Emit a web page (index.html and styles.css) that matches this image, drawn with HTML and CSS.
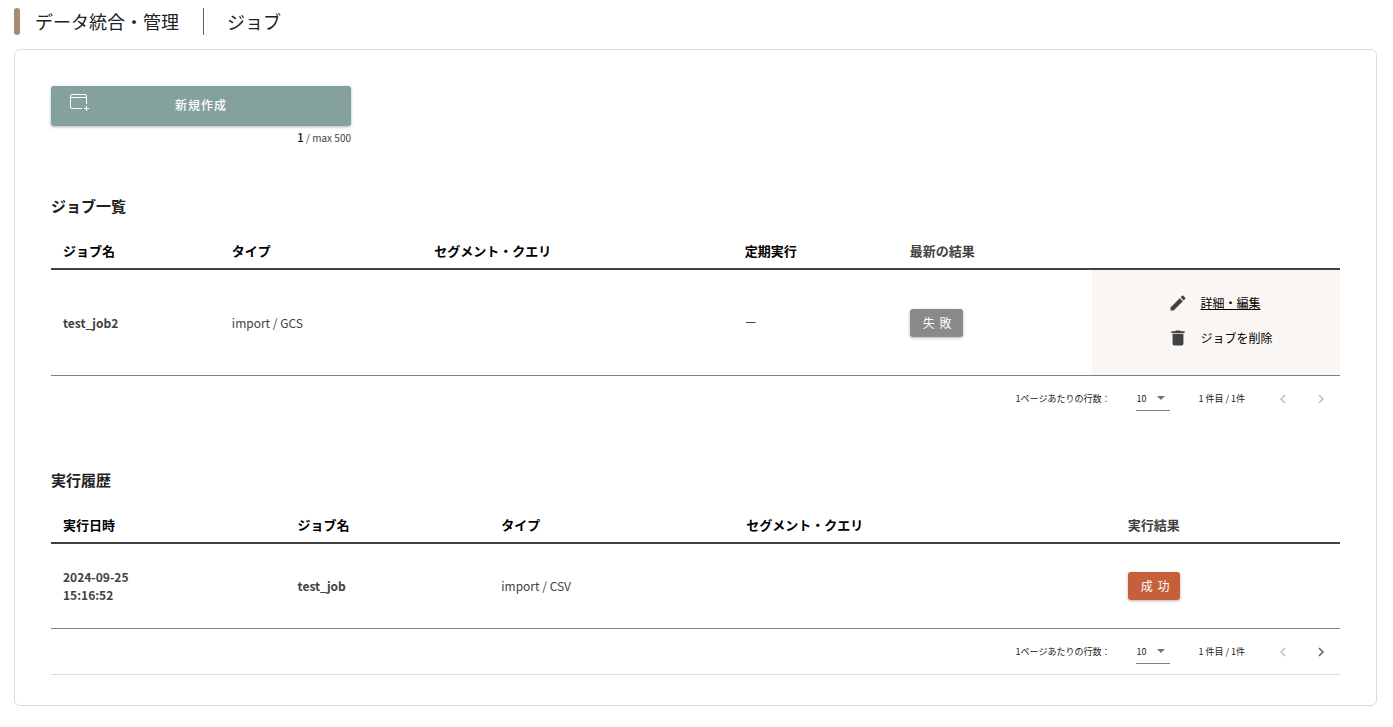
FILE: index.html
```html
<!DOCTYPE html>
<html lang="ja">
<head>
<meta charset="UTF-8">
<meta name="viewport" content="width=device-width, initial-scale=1.0">
<title>データ統合・管理 | ジョブ</title>
<link rel="stylesheet" href="styles.css">
</head>
<body>
<header class="page-header">
    <h1 class="page-title">データ統合・管理</h1>
    <p class="page-subtitle">ジョブ</p>
</header>

<main class="panel">
    <div class="create">
        <button type="button" class="btn-create">
            <svg class="btn-icon" viewBox="0 0 22 20" aria-hidden="true">
                <path d="M13 16.500H3A1.500 1.500 0 0 1 1.500 15V4A1.500 1.500 0 0 1 3 2.500H16A1.500 1.500 0 0 1 17.500 4V12M1.500 5.500H17.500M17.500 14V19M15 16.500H20"/>
            </svg>
            新規作成
        </button>
        <p class="count"><span class="count-now">1</span> / max 500</p>
    </div>

    <section class="section">
        <h2 class="section-title">ジョブ一覧</h2>
        <table class="table jobs">
            <colgroup>
                <col class="job-name"><col class="job-type"><col class="job-segment">
                <col class="job-schedule"><col class="job-result"><col class="job-action">
            </colgroup>
            <thead>
                <tr>
                    <th>ジョブ名</th>
                    <th>タイプ</th>
                    <th>セグメント・クエリ</th>
                    <th>定期実行</th>
                    <th class="muted">最新の結果</th>
                    <th></th>
                </tr>
            </thead>
            <tbody>
                <tr>
                    <td class="strong">test_job2</td>
                    <td>import / GCS</td>
                    <td></td>
                    <td>ー</td>
                    <td><button type="button" class="badge failed">失 敗</button></td>
                    <td class="actions">
                        <a href="#edit" class="action edit">
                            <svg class="action-icon" viewBox="0 0 24 24" aria-hidden="true"><path d="M20.710 7.040C21.100 6.650 21.100 6 20.710 5.630L18.370 3.290C18 2.900 17.350 2.900 16.960 3.290L15.120 5.120L18.870 8.870M3 17.250V21H6.750L17.810 9.930L14.060 6.180L3 17.250Z"/></svg>
                            <span>詳細・編集</span>
                        </a>
                        <button type="button" class="action">
                            <svg class="action-icon" viewBox="0 0 24 24" aria-hidden="true"><path d="M20 4H15.500L14.500 3H9.500L8.500 4H4V6H20M5.500 19A2 2 0 0 0 7.500 21H16.500A2 2 0 0 0 18.500 19V7H5.500V19Z"/></svg>
                            <span>ジョブを削除</span>
                        </button>
                    </td>
                </tr>
            </tbody>
        </table>
        <div class="pagination">
            <label for="jobRows">1ページあたりの行数：</label>
            <div class="rows-select">
                <select id="jobRows">
                    <option selected>10</option>
                    <option>20</option>
                    <option>50</option>
                </select>
                <svg class="caret" viewBox="0 0 8 4" aria-hidden="true"><path d="M0 0H8L4 4Z"/></svg>
            </div>
            <span class="range">1 件目 / 1件</span>
            <button type="button" class="pager" aria-label="前のページ" disabled>
                <svg viewBox="0 0 24 24"><path d="M15.410 7.410L14 6L8 12L14 18L15.410 16.590L10.830 12Z"/></svg>
            </button>
            <button type="button" class="pager" aria-label="次のページ" disabled>
                <svg viewBox="0 0 24 24"><path d="M8.590 16.590L13.170 12L8.590 7.410L10 6L16 12L10 18Z"/></svg>
            </button>
        </div>
    </section>

    <section class="section">
        <h2 class="section-title">実行履歴</h2>
        <table class="table history">
            <colgroup>
                <col class="his-date"><col class="his-name"><col class="his-type">
                <col class="his-segment"><col class="his-result">
            </colgroup>
            <thead>
                <tr>
                    <th>実行日時</th>
                    <th>ジョブ名</th>
                    <th>タイプ</th>
                    <th>セグメント・クエリ</th>
                    <th class="muted">実行結果</th>
                </tr>
            </thead>
            <tbody>
                <tr>
                    <td class="strong">2024-09-25<br>15:16:52</td>
                    <td class="strong">test_job</td>
                    <td>import / CSV</td>
                    <td></td>
                    <td><button type="button" class="badge success">成 功</button></td>
                </tr>
            </tbody>
        </table>
        <div class="pagination bordered">
            <label for="historyRows">1ページあたりの行数：</label>
            <div class="rows-select">
                <select id="historyRows">
                    <option selected>10</option>
                    <option>20</option>
                    <option>50</option>
                </select>
                <svg class="caret" viewBox="0 0 8 4" aria-hidden="true"><path d="M0 0H8L4 4Z"/></svg>
            </div>
            <span class="range">1 件目 / 1件</span>
            <button type="button" class="pager" aria-label="前のページ" disabled>
                <svg viewBox="0 0 24 24"><path d="M15.410 7.410L14 6L8 12L14 18L15.410 16.590L10.830 12Z"/></svg>
            </button>
            <button type="button" class="pager" aria-label="次のページ">
                <svg viewBox="0 0 24 24"><path d="M8.590 16.590L13.170 12L8.590 7.410L10 6L16 12L10 18Z"/></svg>
            </button>
        </div>
    </section>
</main>
</body>
</html>
```

FILE: styles.css
```css
* {
    margin: 0;
    padding: 0;
    box-sizing: border-box;
}
body {
    padding: 8px 16px 20px 14px;
    background-color: #ffffff;
    color: #424242;
    font-family: "Noto Sans CJK JP", sans-serif;
    font-size: 12px;
}
button, select {
    border: none;
    background: none;
    color: inherit;
    font: inherit;
    cursor: pointer;
}

/* header */
.page-header {
    display: flex;
    align-items: center;
    margin-bottom: 14px;
    color: #212121;
    font-size: 18px;
    line-height: 27px;
}
.page-header::before {
    content: "";
    width: 6px;
    height: 27px;
    margin-right: 15px;
    border-radius: 3px;
    background-color: #a58c70;
}
.page-title {
    font-size: 18px;
    font-weight: 400;
}
.page-subtitle {
    margin-left: 24px;
    padding-left: 23px;
    border-left: 1px solid #616161;
}

.panel {
    padding: 36px 36px 30px;
    border: 1px solid #dcdcdc;
    border-radius: 6px;
}

/* create button */
.create {
    width: 300px;
}
.btn-create {
    position: relative;
    display: block;
    width: 100%;
    height: 40px;
    padding-bottom: 4px;
    border-radius: 3px;
    background-color: #85a19e;
    box-shadow: 0 1px 3px rgba(0, 0, 0, 0.3);
    color: #ffffff;
    font-weight: 500;
    letter-spacing: 1px;
}
.btn-icon {
    position: absolute;
    left: 18px;
    top: 6px;
    width: 22px;
    height: 20px;
    fill: none;
    stroke: #ffffff;
    stroke-width: 1;
}
.count {
    font-size: 10px;
    line-height: 22px;
    text-align: right;
}
.count-now {
    color: #212121;
    font-size: 12px;
    font-weight: 500;
}

/* sections */
.section {
    margin-top: 47px;
}
.section-title {
    margin-bottom: 16px;
    color: #212121;
    font-size: 15px;
    font-weight: 700;
    line-height: 24px;
}
.create + .section {
    margin-top: 45px;
}

.table {
    width: 100%;
    table-layout: fixed;
    border-collapse: separate;
    border-spacing: 0;
}
th {
    height: 36px;
    padding: 0 12px 2px;
    border-bottom: 2px solid #424242;
    color: #000000;
    font-size: 13px;
    font-weight: 700;
    text-align: left;
}
th.muted {
    color: #424242;
}
td {
    padding: 0 12px;
    border-bottom: 1px solid #808080;
    line-height: 18px;
    vertical-align: middle;
}
.jobs td {
    height: 106px;
}
.history td {
    height: 85px;
}
.strong {
    font-weight: 700;
}

.job-name { width: 13.1%; }
.job-type { width: 15.7%; }
.job-segment { width: 24.1%; }
.job-schedule { width: 12.8%; }
.job-result { width: 15.1%; }
.job-action { width: 19.2%; }

.his-date { width: 18.2%; }
.his-name { width: 15.8%; }
.his-type { width: 19%; }
.his-segment { width: 29.6%; }
.his-result { width: 17.4%; }

.badge {
    height: 28px;
    padding: 0 10px 0 13px;
    border-radius: 3px;
    box-shadow: 0 1px 3px rgba(0, 0, 0, 0.3);
    color: #ffffff;
    letter-spacing: 1px;
}
.failed {
    background-color: #8a8a8a;
}
.success {
    background-color: #c5603a;
}

.jobs .actions {
    padding: 0 0 4px 76px;
    background-color: #f9f6f3;
}
.action {
    display: flex;
    align-items: center;
    gap: 12px;
    color: #000000;
    line-height: 20px;
}
.action + .action {
    margin-top: 15px;
}
.action-icon {
    width: 20px;
    height: 20px;
    fill: #424242;
}
.edit {
    text-decoration: none;
}
.edit span {
    text-decoration: underline;
}

/* pagination */
.pagination {
    display: flex;
    justify-content: flex-end;
    align-items: center;
    height: 45px;
    color: #212121;
    font-size: 9px;
}
.bordered {
    height: 46px;
    border-bottom: 1px solid #dcdcdc;
}
.rows-select {
    position: relative;
    width: 34px;
    margin: 0 28px 0 26px;
}
.rows-select select {
    display: block;
    width: 100%;
    height: 25px;
    border-bottom: 1px solid #808080;
    appearance: none;
}
.caret {
    position: absolute;
    right: 5px;
    top: 10px;
    width: 8px;
    height: 4px;
    fill: #757575;
    pointer-events: none;
}
.range {
    margin-right: 19px;
}
.pager {
    display: flex;
    justify-content: center;
    width: 38px;
}
.pager svg {
    width: 18px;
    height: 18px;
    fill: #616161;
}
.pager:disabled svg {
    fill: #bdbdbd;
}
```
